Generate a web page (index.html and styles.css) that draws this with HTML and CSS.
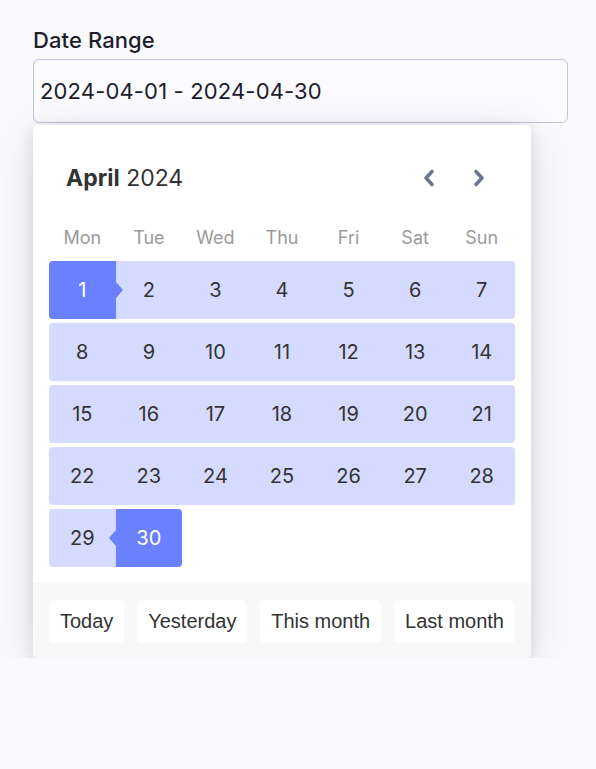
FILE: index.html
```html
<!DOCTYPE html>
<html lang="en">
<head>
<meta charset="utf-8">
<title>Date Range</title>
<link rel="stylesheet" href="styles.css">
</head>
<body>
<div class="field">
  <label class="label" for="range">Date Range</label>
  <div class="input" id="range">2024-04-01 - 2024-04-30</div>
  <div class="popup">
    <div class="head">
      <div class="title"><b>April</b> 2024</div>
      <div class="nav">
        <button class="navbtn" aria-label="Previous month">
          <svg width="16" height="20" viewBox="0 0 16 20"><path d="M11 3.5 L5 10 L11 16.5" fill="none" stroke="#6b7890" stroke-width="3.6" stroke-linecap="round" stroke-linejoin="round"/></svg>
        </button>
        <button class="navbtn" aria-label="Next month">
          <svg width="16" height="20" viewBox="0 0 16 20"><path d="M5 3.5 L11 10 L5 16.5" fill="none" stroke="#6b7890" stroke-width="3.6" stroke-linecap="round" stroke-linejoin="round"/></svg>
        </button>
      </div>
    </div>
    <div class="weekdays">
      <span>Mon</span><span>Tue</span><span>Wed</span><span>Thu</span><span>Fri</span><span>Sat</span><span>Sun</span>
    </div>
    <div class="weeks">
      <div class="week">
        <span class="day sel start">1</span><span class="day">2</span><span class="day">3</span><span class="day">4</span><span class="day">5</span><span class="day">6</span><span class="day">7</span>
      </div>
      <div class="week">
        <span class="day">8</span><span class="day">9</span><span class="day">10</span><span class="day">11</span><span class="day">12</span><span class="day">13</span><span class="day">14</span>
      </div>
      <div class="week">
        <span class="day">15</span><span class="day">16</span><span class="day">17</span><span class="day">18</span><span class="day">19</span><span class="day">20</span><span class="day">21</span>
      </div>
      <div class="week">
        <span class="day">22</span><span class="day">23</span><span class="day">24</span><span class="day">25</span><span class="day">26</span><span class="day">27</span><span class="day">28</span>
      </div>
      <div class="week">
        <span class="day">29</span><span class="day sel end">30</span>
      </div>
    </div>
    <div class="footer">
      <button class="preset">Today</button>
      <button class="preset">Yesterday</button>
      <button class="preset">This month</button>
      <button class="preset">Last month</button>
    </div>
  </div>
</div>
</body>
</html>
```

FILE: styles.css
```css
html, body {
  margin: 0;
  padding: 0;
}
body {
  background: #faf9fd;
  font-family: Inter, "Noto Sans", sans-serif;
  color: #1c1c2b;
}
.field {
  padding: 26px 0 0 33px;
  width: 535px;
}
.label {
  display: block;
  font-size: 22px;
  line-height: 28px;
  font-weight: 450;
  color: #1d1d2c;
  letter-spacing: 0.1px;
}
.input {
  margin-top: 5px;
  box-sizing: border-box;
  height: 64px;
  border: 1px solid #bfc4e0;
  border-radius: 6px;
  padding: 0 6px;
  display: flex;
  align-items: center;
  font-size: 22px;
  letter-spacing: 0.15px;
  color: #1c1c2b;
  background: #fbfaff;
}
.popup {
  position: relative;
  z-index: 1;
  margin-top: 2px;
  padding-top: 16px;
  width: 498px;
  background: #fff;
  border-radius: 5px;
  box-shadow: 0 2px 14px rgba(20, 20, 40, 0.09), 0 8px 44px rgba(20, 20, 40, 0.12);
}
.head {
  display: flex;
  align-items: center;
  justify-content: space-between;
  height: 73px;
  padding: 0 40px 0 33px;
}
.title {
  font-size: 23px;
  color: #333;
}
.title b {
  font-weight: 700;
}
.nav {
  display: flex;
  gap: 26px;
}
.navbtn {
  width: 24px;
  height: 24px;
  padding: 0;
  border: 0;
  background: none;
  display: flex;
  align-items: center;
  justify-content: center;
}
.weekdays {
  display: grid;
  grid-template-columns: repeat(7, 1fr);
  height: 47px;
  margin: 0 16px;
  align-items: center;
  text-align: center;
  font-size: 18px;
  color: #9a9a9a;
}
.weeks {
  display: flex;
  flex-direction: column;
  gap: 4px;
  margin: 0 16px;
}
.week {
  display: grid;
  grid-template-columns: repeat(7, 1fr);
  height: 58px;
}
.day {
  position: relative;
  display: flex;
  align-items: center;
  justify-content: center;
  background: #d5daff;
  font-size: 20px;
  color: #333;
}
.day:first-child {
  border-radius: 4px 0 0 4px;
}
.day:last-child {
  border-radius: 0 4px 4px 0;
}
.day.sel {
  background: #6b80ff;
  color: #fff;
}
.day.start::after {
  content: "";
  position: absolute;
  right: -7px;
  top: 50%;
  margin-top: -8px;
  border-left: 7px solid #6b80ff;
  border-top: 8px solid transparent;
  border-bottom: 8px solid transparent;
  z-index: 1;
}
.day.end::before {
  content: "";
  position: absolute;
  left: -7px;
  top: 50%;
  margin-top: -8px;
  border-right: 7px solid #6b80ff;
  border-top: 8px solid transparent;
  border-bottom: 8px solid transparent;
  z-index: 1;
}
.footer {
  margin-top: 16px;
  background: #f8f8f8;
  border-radius: 0 0 5px 5px;
  padding: 17px 16px 15px;
  display: flex;
  justify-content: space-between;
}
.preset {
  height: 43px;
  padding: 0 11px;
  border: 0;
  border-radius: 5px;
  background: #fff;
  font-family: "Liberation Sans", Arial, sans-serif;
  font-size: 20px;
  color: #333;
}
```
